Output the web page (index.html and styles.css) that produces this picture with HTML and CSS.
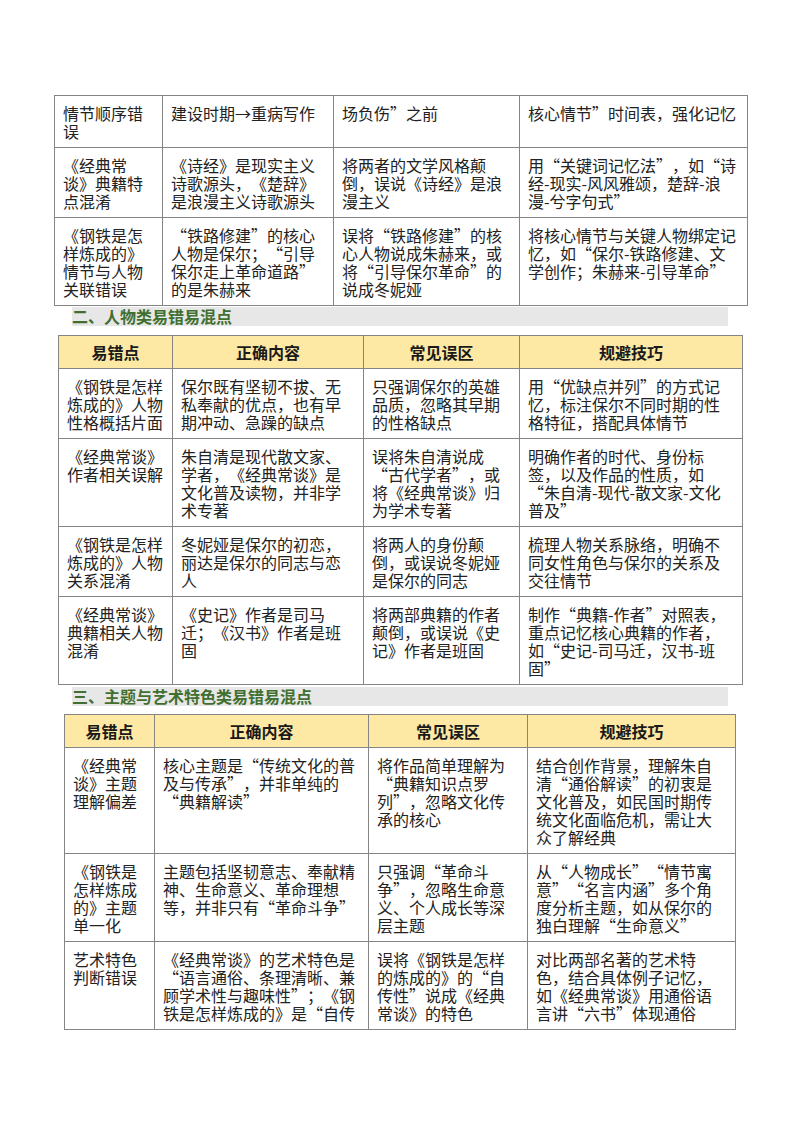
FILE: index.html
```html
<!DOCTYPE html>
<html lang="zh-CN">
<head>
<meta charset="utf-8">
<title>易错易混点</title>
<link rel="stylesheet" href="styles.css">
</head>
<body>
<div class="page">
  <table class="grid t1">
    <colgroup><col class="a"><col class="b"><col class="c"><col class="d"></colgroup>
    <tr>
      <td>情节顺序错<br>误</td>
      <td>建设时期→重病写作</td>
      <td>场负伤”之前</td>
      <td>核心情节”时间表，强化记忆</td>
    </tr>
    <tr>
      <td>《经典常<br>谈》典籍特<br>点混淆</td>
      <td>《诗经》是现实主义<br>诗歌源头，《楚辞》<br>是浪漫主义诗歌源头</td>
      <td>将两者的文学风格颠<br>倒，误说《诗经》是浪<br>漫主义</td>
      <td>用“关键词记忆法”，如“诗<br>经-现实-风风雅颂，楚辞-浪<br>漫-兮字句式”</td>
    </tr>
    <tr>
      <td>《钢铁是怎<br>样炼成的》<br>情节与人物<br>关联错误</td>
      <td>“铁路修建”的核心<br>人物是保尔；“引导<br>保尔走上革命道路”<br>的是朱赫来</td>
      <td>误将“铁路修建”的核<br>心人物说成朱赫来，或<br>将“引导保尔革命”的<br>说成冬妮娅</td>
      <td>将核心情节与关键人物绑定记<br>忆，如“保尔-铁路修建、文<br>学创作；朱赫来-引导革命”</td>
    </tr>
  </table>

  <h2 class="section s2">二、人物类易错易混点</h2>

  <table class="grid t2">
    <colgroup><col class="a"><col class="b"><col class="c"><col class="d"></colgroup>
    <tr class="head">
      <th>易错点</th><th>正确内容</th><th>常见误区</th><th>规避技巧</th>
    </tr>
    <tr>
      <td>《钢铁是怎样<br>炼成的》人物<br>性格概括片面</td>
      <td>保尔既有坚韧不拔、无<br>私奉献的优点，也有早<br>期冲动、急躁的缺点</td>
      <td>只强调保尔的英雄<br>品质，忽略其早期<br>的性格缺点</td>
      <td>用“优缺点并列”的方式记<br>忆，标注保尔不同时期的性<br>格特征，搭配具体情节</td>
    </tr>
    <tr>
      <td>《经典常谈》<br>作者相关误解</td>
      <td>朱自清是现代散文家、<br>学者，《经典常谈》是<br>文化普及读物，并非学<br>术专著</td>
      <td>误将朱自清说成<br>“古代学者”，或<br>将《经典常谈》归<br>为学术专著</td>
      <td>明确作者的时代、身份标<br>签，以及作品的性质，如<br>“朱自清-现代-散文家-文化<br>普及”</td>
    </tr>
    <tr>
      <td>《钢铁是怎样<br>炼成的》人物<br>关系混淆</td>
      <td>冬妮娅是保尔的初恋，<br>丽达是保尔的同志与恋<br>人</td>
      <td>将两人的身份颠<br>倒，或误说冬妮娅<br>是保尔的同志</td>
      <td>梳理人物关系脉络，明确不<br>同女性角色与保尔的关系及<br>交往情节</td>
    </tr>
    <tr>
      <td>《经典常谈》<br>典籍相关人物<br>混淆</td>
      <td>《史记》作者是司马<br>迁；《汉书》作者是班<br>固</td>
      <td>将两部典籍的作者<br>颠倒，或误说《史<br>记》作者是班固</td>
      <td>制作“典籍-作者”对照表，<br>重点记忆核心典籍的作者，<br>如“史记-司马迁，汉书-班<br>固”</td>
    </tr>
  </table>

  <h2 class="section s3">三、主题与艺术特色类易错易混点</h2>

  <table class="grid t3">
    <colgroup><col class="a"><col class="b"><col class="c"><col class="d"></colgroup>
    <tr class="head">
      <th>易错点</th><th>正确内容</th><th>常见误区</th><th>规避技巧</th>
    </tr>
    <tr>
      <td>《经典常<br>谈》主题<br>理解偏差</td>
      <td>核心主题是“传统文化的普<br>及与传承”，并非单纯的<br>“典籍解读”</td>
      <td>将作品简单理解为<br>“典籍知识点罗<br>列”，忽略文化传<br>承的核心</td>
      <td>结合创作背景，理解朱自<br>清“通俗解读”的初衷是<br>文化普及，如民国时期传<br>统文化面临危机，需让大<br>众了解经典</td>
    </tr>
    <tr>
      <td>《钢铁是<br>怎样炼成<br>的》主题<br>单一化</td>
      <td>主题包括坚韧意志、奉献精<br>神、生命意义、革命理想<br>等，并非只有“革命斗争”</td>
      <td>只强调“革命斗<br>争”，忽略生命意<br>义、个人成长等深<br>层主题</td>
      <td>从“人物成长”“情节寓<br>意”“名言内涵”多个角<br>度分析主题，如从保尔的<br>独白理解“生命意义”</td>
    </tr>
    <tr>
      <td>艺术特色<br>判断错误</td>
      <td>《经典常谈》的艺术特色是<br>“语言通俗、条理清晰、兼<br>顾学术性与趣味性”；《钢<br>铁是怎样炼成的》是“自传</td>
      <td>误将《钢铁是怎样<br>的炼成的》的“自<br>传性”说成《经典<br>常谈》的特色</td>
      <td>对比两部名著的艺术特<br>色，结合具体例子记忆，<br>如《经典常谈》用通俗语<br>言讲“六书”体现通俗</td>
    </tr>
  </table>
</div>
</body>
</html>
```

FILE: styles.css
```css
* { box-sizing: border-box; }

html, body {
  margin: 0;
  padding: 0;
  background: #ffffff;
}

body {
  font-family: "Noto Sans CJK SC", "Noto Sans", sans-serif;
  color: #222222;
  font-size: 16px;
  line-height: 18px;
  text-spacing-trim: space-all;
}

.page {
  padding-top: 95px;
  width: 800px;
}

.grid {
  border-collapse: collapse;
  table-layout: fixed;
}

.grid td,
.grid th {
  border: 1px solid #858585;
  padding: 8px 7px 7px 8px;
  vertical-align: top;
  text-align: left;
  font-weight: 400;
  white-space: nowrap;
}

.grid .head th {
  background: #fde8a4;
  font-weight: 700;
  text-align: center;
  padding: 7px 4px;
  color: #1a1a1a;
}

.t1 { margin-left: 54px; width: 693px; }
.t1 .a { width: 108px; }
.t1 .b { width: 171px; }
.t1 .c { width: 186px; }
.t1 .d { width: 228px; }

.t2 { margin-left: 58px; width: 684px; }
.t2 .a { width: 114px; }
.t2 .b { width: 191px; }
.t2 .c { width: 156px; }
.t2 .d { width: 223px; }

.t3 { margin-left: 64px; width: 671px; }
.t3 .a { width: 90px; }
.t3 .b { width: 214px; }
.t3 .c { width: 159px; }
.t3 .d { width: 208px; }

.section {
  margin: 0 0 0 72px;
  width: 656px;
  height: 19px;
  background: #e7e7e7;
  color: #416f2f;
  font-size: 16px;
  line-height: 19px;
  font-weight: 700;
}

.s2 { margin-top: 1px; margin-bottom: 9px; }
.s3 { margin-top: 2px; margin-bottom: 8px; }
```
